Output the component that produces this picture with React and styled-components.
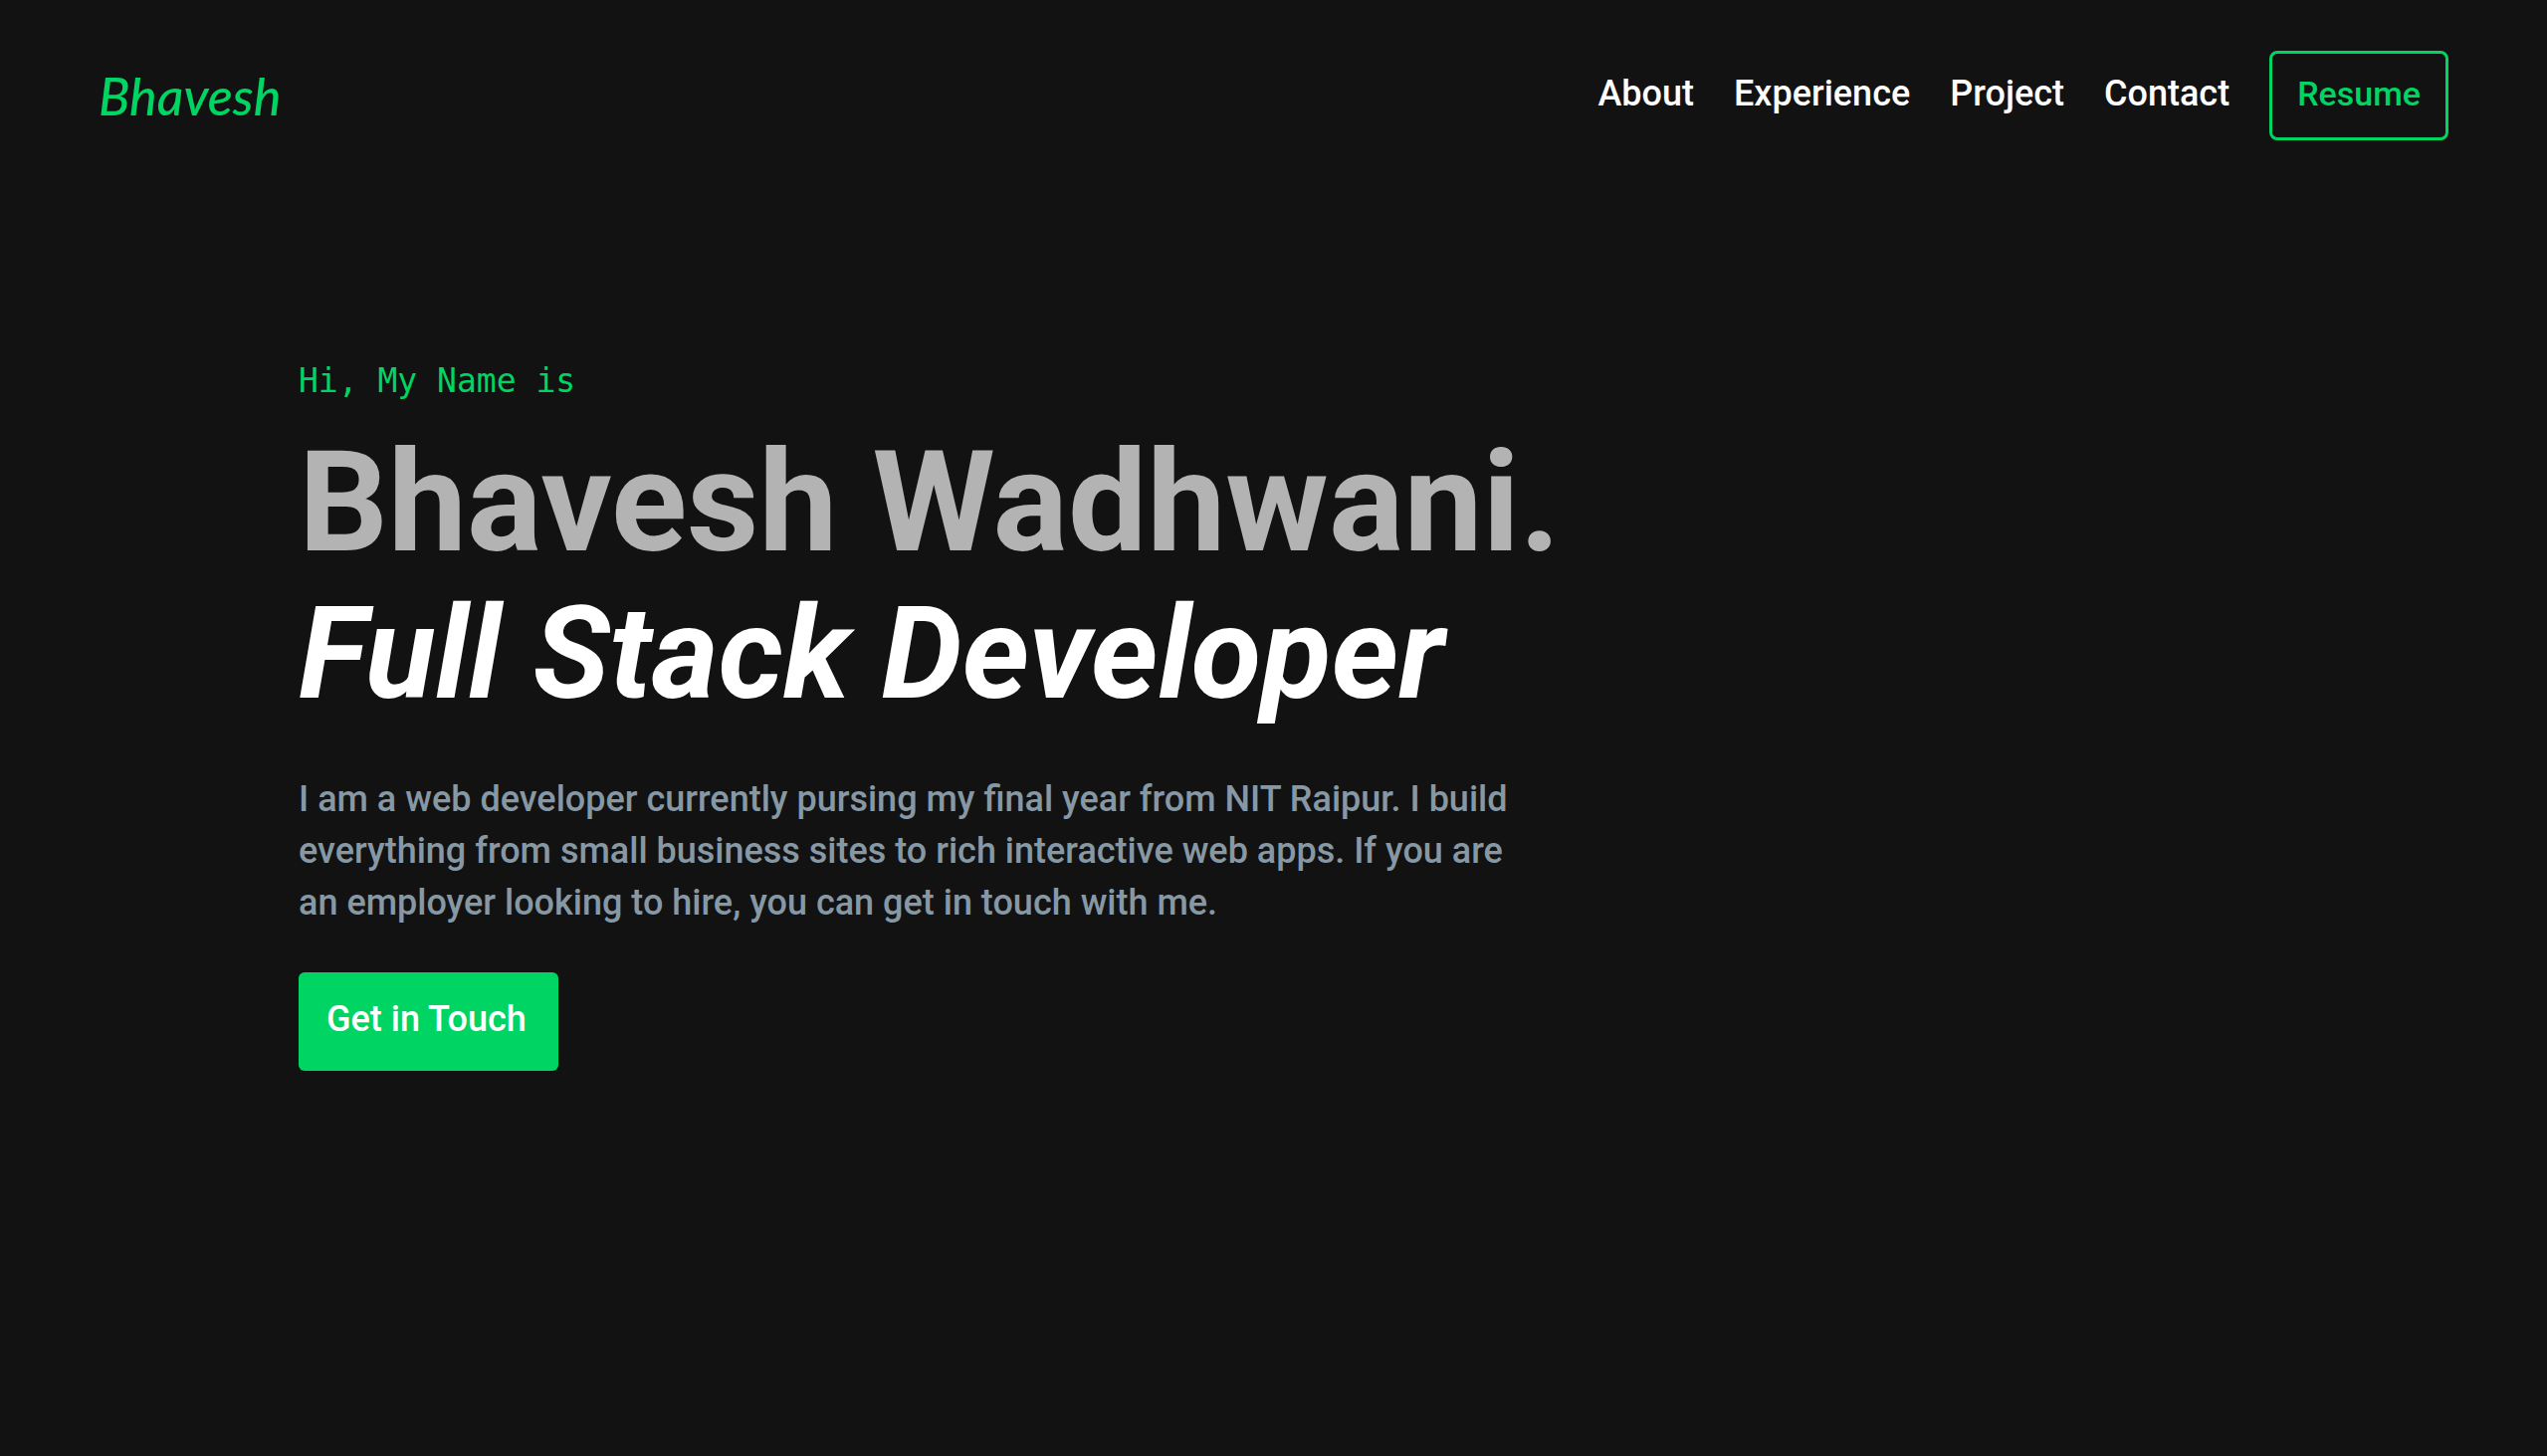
import React from "react";
import styled, { createGlobalStyle } from "styled-components";

const green = "#00d563";
const background = "#121212";

const GlobalStyle = createGlobalStyle`
  *, *::before, *::after { box-sizing: border-box; }
  body {
    margin: 0;
    min-height: 100vh;
    background: ${background};
    color: #ffffff;
    font-family: Roboto, "Liberation Sans", sans-serif;
    font-size: 36px;
    font-weight: 500;
  }
`;

const Header = styled.header`
  display: flex;
  align-items: center;
  justify-content: space-between;
  padding: 51px 99px 0;
`;

const Logo = styled.a`
  color: ${green};
  font-family: Lato, sans-serif;
  font-size: 52px;
  font-style: italic;
  font-weight: 500;
  line-height: 80px;
  text-decoration: none;
`;

const Nav = styled.nav`
  display: flex;
  align-items: center;
  gap: 40px;
`;

const NavLink = styled.a`
  padding-bottom: 4px;
  color: #ffffff;
  line-height: 52px;
  text-decoration: none;
`;

const ResumeLink = styled.a`
  padding: 16px 25px 20px;
  border: 3px solid ${green};
  border-radius: 8px;
  color: ${green};
  font-size: 34px;
  line-height: 48px;
  text-decoration: none;
`;

const Hero = styled.main`
  display: flex;
  flex-direction: column;
  align-items: flex-start;
  padding: 222px 300px 0;
`;

const Greeting = styled.p`
  margin: 0 0 22px;
  color: ${green};
  font-family: "DejaVu Sans Mono", monospace;
  font-size: 33px;
  font-weight: 400;
  line-height: 40px;
`;

const Name = styled.h1`
  margin: 0;
  color: #b3b3b3;
  font-size: 141px;
  font-weight: 700;
  line-height: 160px;
`;

const Role = styled.h2`
  margin: 0 0 48px;
  font-size: 129px;
  font-style: italic;
  font-weight: 700;
  line-height: 144px;
`;

const Bio = styled.p`
  max-width: 1220px;
  margin: 0 0 44px;
  color: #8798a5;
  line-height: 52px;
`;

const ContactButton = styled.button`
  padding: 21px 32px 26px 28px;
  border: 0;
  border-radius: 6px;
  background: ${green};
  color: #ffffff;
  font: inherit;
  line-height: 52px;
  cursor: pointer;
`;

const links = ["About", "Experience", "Project", "Contact"];

export default function App() {
  return (
    <>
      <GlobalStyle />
      <Header>
        <Logo href="#home">Bhavesh</Logo>
        <Nav>
          {links.map((label) => (
            <NavLink key={label} href={`#${label.toLowerCase()}`}>
              {label}
            </NavLink>
          ))}
          <ResumeLink href="#resume">Resume</ResumeLink>
        </Nav>
      </Header>
      <Hero>
        <Greeting>Hi, My Name is</Greeting>
        <Name>Bhavesh Wadhwani.</Name>
        <Role>Full Stack Developer</Role>
        <Bio>
          I am a web developer currently pursing my final year from NIT Raipur. I
          build everything from small business sites to rich interactive web apps.
          If you are an employer looking to hire, you can get in touch with me.
        </Bio>
        <ContactButton type="button">Get in Touch</ContactButton>
      </Hero>
    </>
  );
}
